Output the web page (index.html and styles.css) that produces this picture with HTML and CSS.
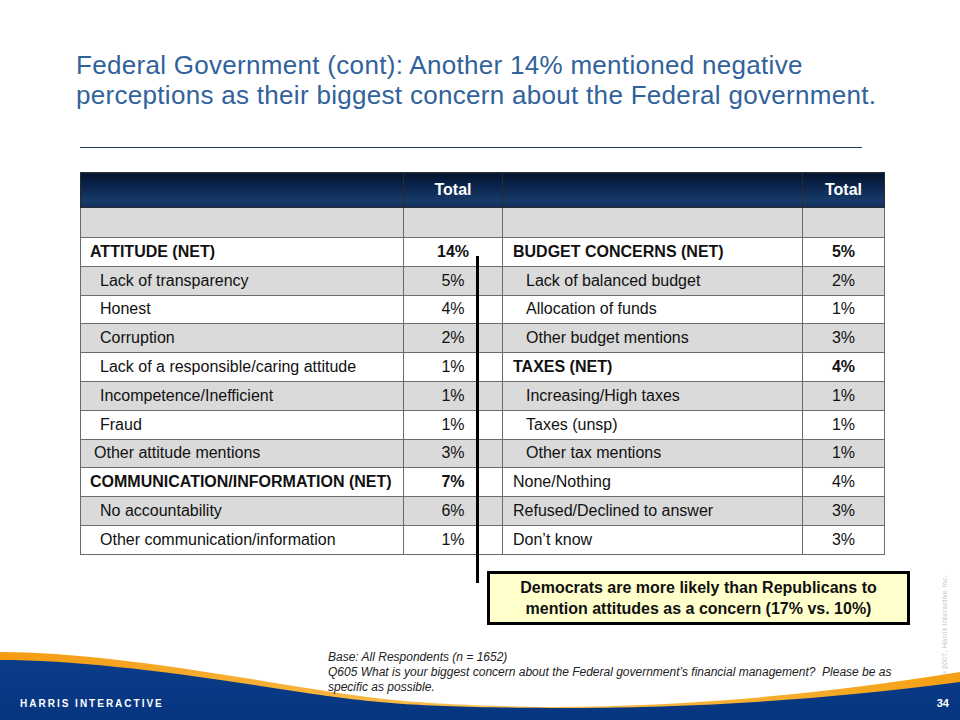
FILE: index.html
```html
<!DOCTYPE html>
<html>
<head>
<meta charset="utf-8">
<link rel="stylesheet" href="styles.css">
</head>
<body>
<div class="slide">
  <h1 class="title">Federal Government (cont): Another 14% mentioned negative perceptions as their biggest concern about the Federal government.</h1>
  <div class="rule"></div>
  <table class="data">
    <colgroup><col class="c1"><col class="c2"><col class="c3"><col class="c4"></colgroup>
    <tr class="head"><th></th><th>Total</th><th></th><th>Total</th></tr>
    <tr class="blank gray"><td></td><td></td><td></td><td></td></tr>
    <tr class="row"><td class="net">ATTITUDE (NET)</td><td class="pct b">14%</td><td class="net r">BUDGET CONCERNS (NET)</td><td class="pct b">5%</td></tr>
    <tr class="row gray"><td class="sub">Lack of transparency</td><td class="pct">5%</td><td class="rsub">Lack of balanced budget</td><td class="pct">2%</td></tr>
    <tr class="row"><td class="sub">Honest</td><td class="pct">4%</td><td class="rsub">Allocation of funds</td><td class="pct">1%</td></tr>
    <tr class="row gray"><td class="sub">Corruption</td><td class="pct">2%</td><td class="rsub">Other budget mentions</td><td class="pct">3%</td></tr>
    <tr class="row"><td class="sub">Lack of a responsible/caring attitude</td><td class="pct">1%</td><td class="net r">TAXES (NET)</td><td class="pct b">4%</td></tr>
    <tr class="row gray"><td class="sub">Incompetence/Inefficient</td><td class="pct">1%</td><td class="rsub">Increasing/High taxes</td><td class="pct">1%</td></tr>
    <tr class="row"><td class="sub">Fraud</td><td class="pct">1%</td><td class="rsub">Taxes (unsp)</td><td class="pct">1%</td></tr>
    <tr class="row gray"><td class="mid">Other attitude mentions</td><td class="pct">3%</td><td class="rsub">Other tax mentions</td><td class="pct">1%</td></tr>
    <tr class="row"><td class="net">COMMUNICATION/INFORMATION (NET)</td><td class="pct b">7%</td><td class="rtop">None/Nothing</td><td class="pct">4%</td></tr>
    <tr class="row gray"><td class="sub">No accountability</td><td class="pct">6%</td><td class="rtop">Refused/Declined to answer</td><td class="pct">3%</td></tr>
    <tr class="row"><td class="sub">Other communication/information</td><td class="pct">1%</td><td class="rtop">Don’t know</td><td class="pct">3%</td></tr>
  </table>
  <div class="callout">Democrats are more likely than Republicans to<br>mention attitudes as a concern (17% vs. 10%)</div>
  <div class="pointer"></div>
  <div class="copyright">©2007, Harris Interactive Inc.</div>
  <footer class="footer">
    <svg class="swoosh" width="960" height="72" viewBox="0 0 960 72" preserveAspectRatio="none">
      <defs>
        <linearGradient id="og" x1="0" x2="1" y1="0" y2="0">
          <stop offset="0" stop-color="#f59b12"/>
          <stop offset="0.5" stop-color="#f8c050"/>
          <stop offset="1" stop-color="#f5a015"/>
        </linearGradient>
        <linearGradient id="bg" x1="0" x2="0" y1="0" y2="1">
          <stop offset="0" stop-color="#0b3c88"/>
          <stop offset="1" stop-color="#073580"/>
        </linearGradient>
      </defs>
      <path d="M0,4 C80,4 180,19 300,39 C380,52 420,57 550,59 C700,58 820,46 960,24 L960,72 L0,72 Z" fill="url(#og)"/>
      <path d="M0,12 C80,12 180,25 300,44 C380,56 420,59 550,60 C700,60 820,52 960,34 L960,72 L0,72 Z" fill="url(#bg)"/>
    </svg>
    <div class="notes">
      <p>Base: All Respondents (n = 1652)</p>
      <p>Q605 What is your biggest concern about the Federal government’s financial management?&nbsp; Please be as specific as possible.</p>
    </div>
    <div class="brandrow">
      <span class="brand">HARRIS INTERACTIVE</span>
      <span class="page">34</span>
    </div>
  </footer>
</div>
</body>
</html>
```
FILE: styles.css
```css
html, body {
  margin: 0;
  padding: 0;
  background: #ffffff;
}
.slide {
  position: relative;
  width: 960px;
  height: 720px;
  overflow: hidden;
  display: flex;
  flex-direction: column;
  font-family: "Liberation Sans", Arial, sans-serif;
  color: #111;
}
.title {
  margin: 50px 0 0 76px;
  width: 820px;
  font-weight: normal;
  font-size: 26px;
  letter-spacing: 0.3px;
  line-height: 30px;
  color: #31629c;
}
.rule {
  margin: 37px 0 0 80px;
  width: 782px;
  height: 1px;
  background: #1c3a66;
}
.data {
  margin: 24px 0 0 80px;
  width: 804px;
  border-collapse: collapse;
  table-layout: fixed;
  font-size: 16px;
}
.c1 { width: 323px; }
.c2 { width: 99px; }
.c3 { width: 300px; }
.c4 { width: 82px; }
.data td, .data th {
  border: 1px solid #6a6a6a;
  padding: 0;
  white-space: nowrap;
}
.head th {
  height: 34px;
  color: #fff;
  font-weight: bold;
  text-align: center;
  background: linear-gradient(to bottom, #03122c 0%, #0a244a 35%, #183a6a 80%, #12305c 100%);
  border-color: #2a2a2a;
}
.blank td { height: 29px; }
.row td { height: 27.8px; }
.gray td { background: #dadada; }
.net { font-weight: bold; padding-left: 9px !important; }
.net.r { padding-left: 10px !important; }
.sub { padding-left: 19px !important; }
.mid { padding-left: 13px !important; }
.rsub { padding-left: 23px !important; }
.rtop { padding-left: 10px !important; }
.pct { text-align: center; }
.b { font-weight: bold; }
.callout {
  margin: 16px 0 0 487px;
  width: 417px;
  height: 48px;
  border: 3px solid #000;
  background: #ffffcc;
  font-weight: bold;
  font-size: 16px;
  line-height: 21px;
  text-align: center;
  display: flex;
  align-items: center;
  justify-content: center;
}
.pointer {
  position: absolute;
  left: 476px;
  top: 256px;
  width: 3px;
  height: 327px;
  background: #000;
}
.copyright {
  position: absolute;
  left: 941px;
  top: 575px;
  writing-mode: vertical-rl;
  transform: rotate(180deg);
  font-size: 7px;
  letter-spacing: 0.3px;
  color: #c4c4c4;
}
.footer {
  position: relative;
  margin-top: auto;
  height: 72px;
}
.swoosh {
  position: absolute;
  left: 0;
  top: 0;
  display: block;
}
.notes {
  position: relative;
  margin: 2px 0 0 328px;
  width: 580px;
  font-style: italic;
  font-size: 12px;
  line-height: 15px;
  color: #222;
}
.notes p { margin: 0; }
.brandrow {
  position: relative;
  display: flex;
  justify-content: space-between;
  align-items: center;
  margin-top: 2px;
  padding: 0 11px 0 20px;
  height: 12px;
  color: #fff;
  font-weight: bold;
}
.brand {
  font-size: 10px;
  letter-spacing: 2px;
}
.page {
  font-size: 11px;
}
```
